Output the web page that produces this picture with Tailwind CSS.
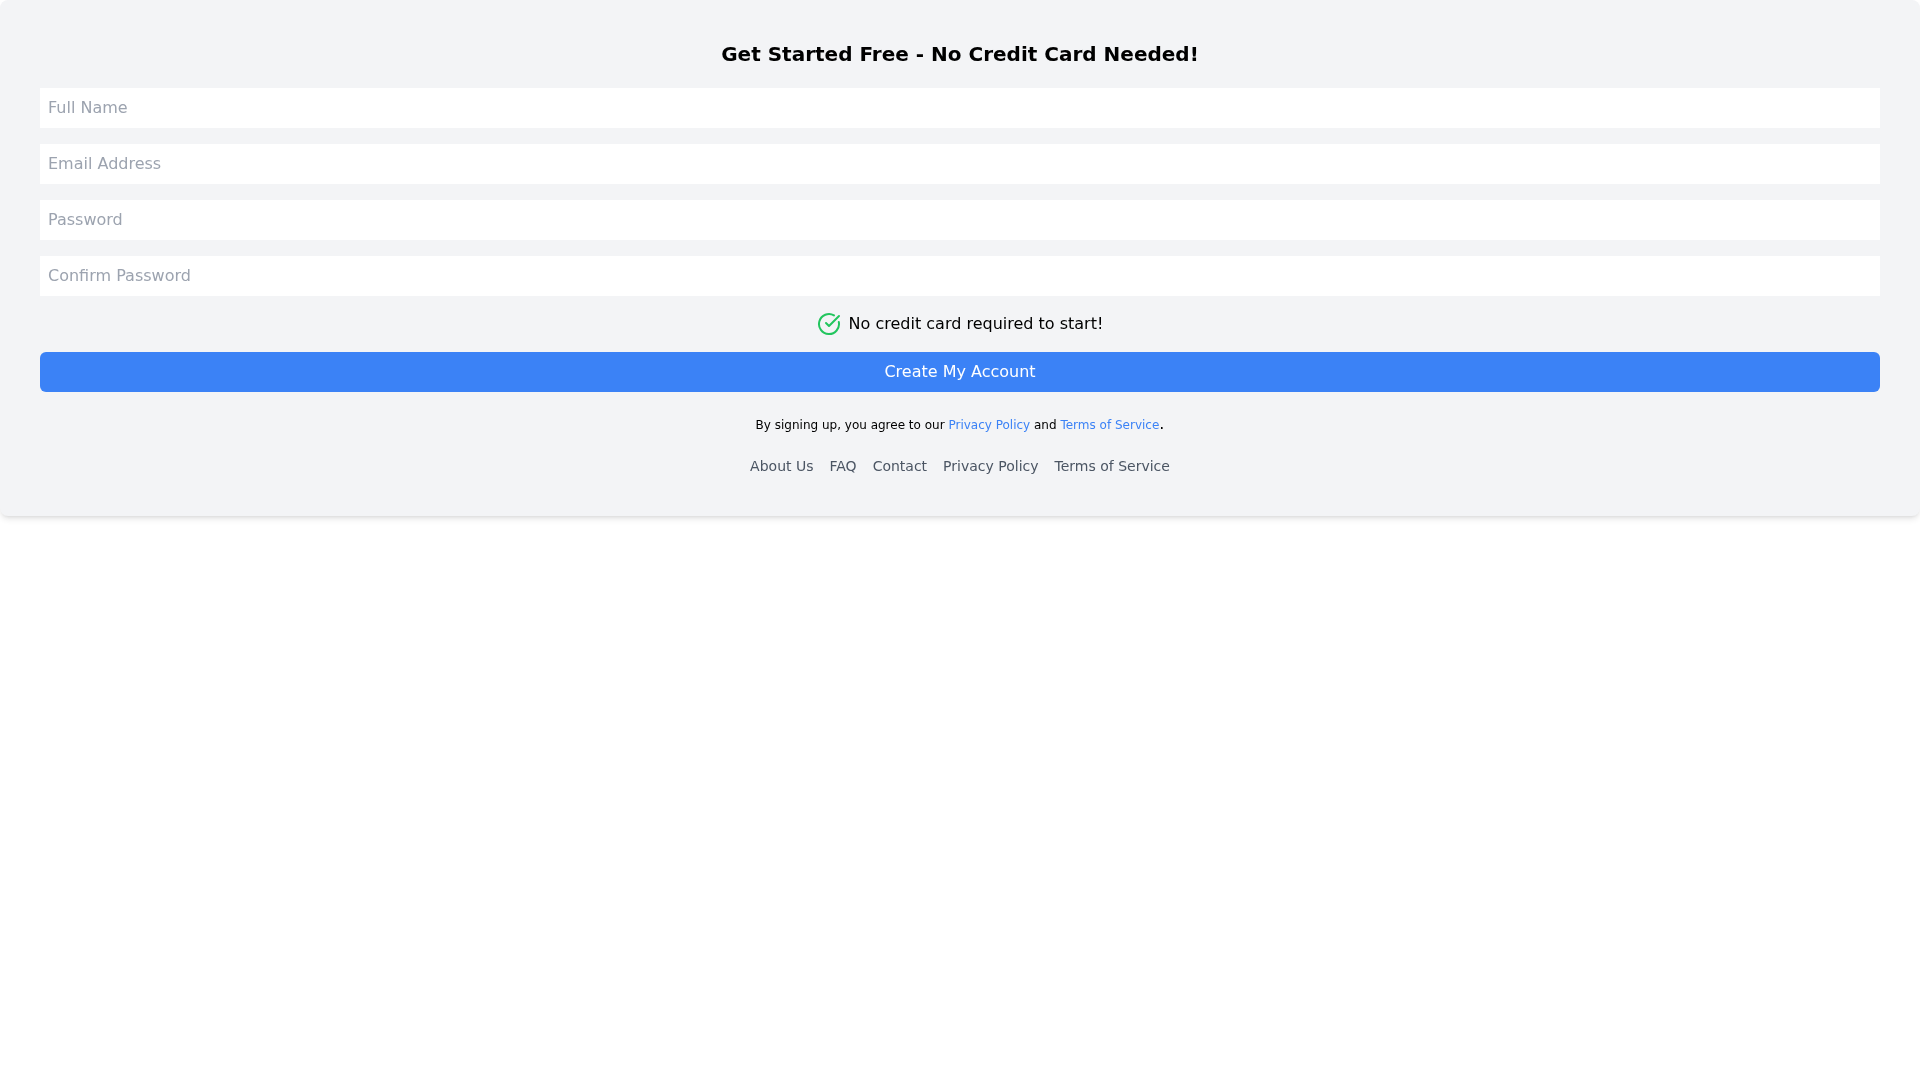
<!DOCTYPE html>
<html lang="en">
<head>
<meta charset="utf-8">
<title>Sign up</title>
<script src="https://cdn.jsdelivr.net/npm/@tailwindcss/browser@4"></script>
</head>
<body class="min-h-screen bg-white font-['DejaVu_Sans',sans-serif]">
<div class="bg-[#f3f4f6] rounded-lg shadow-md p-10 transform-gpu">
  <h1 class="text-xl font-bold text-center text-black mb-5">Get Started Free - No Credit Card Needed!</h1>
  <form class="flex flex-col gap-4">
    <input type="text" placeholder="Full Name" class="w-full py-2 px-2 bg-white text-base placeholder:text-[#9ca3af]">
    <input type="email" placeholder="Email Address" class="w-full py-2 px-2 bg-white text-base placeholder:text-[#9ca3af]">
    <input type="password" placeholder="Password" class="w-full py-2 px-2 bg-white text-base placeholder:text-[#9ca3af]">
    <input type="password" placeholder="Confirm Password" class="w-full py-2 px-2 bg-white text-base placeholder:text-[#9ca3af]">
    <div class="flex items-center justify-center gap-2 text-base text-black">
      <svg xmlns="http://www.w3.org/2000/svg" width="24" height="24" viewBox="0 0 24 24" fill="none" stroke="currentColor" stroke-width="2" stroke-linecap="round" stroke-linejoin="round" class="text-[#22c55e]"><path d="M21.801 10A10 10 0 1 1 17 3.335"/><path d="m9 11 3 3L22 4"/></svg>
      <span>No credit card required to start!</span>
    </div>
    <button type="button" class="w-full h-10 bg-[#3b82f6] text-white text-base rounded-md">Create My Account</button>
  </form>
  <p class="mt-5 text-base text-center text-black"><span class="text-xs">By signing up, you agree to our <a href="#" class="text-[#3b82f6]">Privacy Policy</a> and <a href="#" class="text-[#3b82f6]">Terms of Service</a></span>.</p>
  <nav class="mt-5 flex justify-center gap-4 text-sm text-[#4b5563]">
    <a href="#">About Us</a>
    <a href="#">FAQ</a>
    <a href="#">Contact</a>
    <a href="#">Privacy Policy</a>
    <a href="#">Terms of Service</a>
  </nav>
</div>
</body>
</html>
